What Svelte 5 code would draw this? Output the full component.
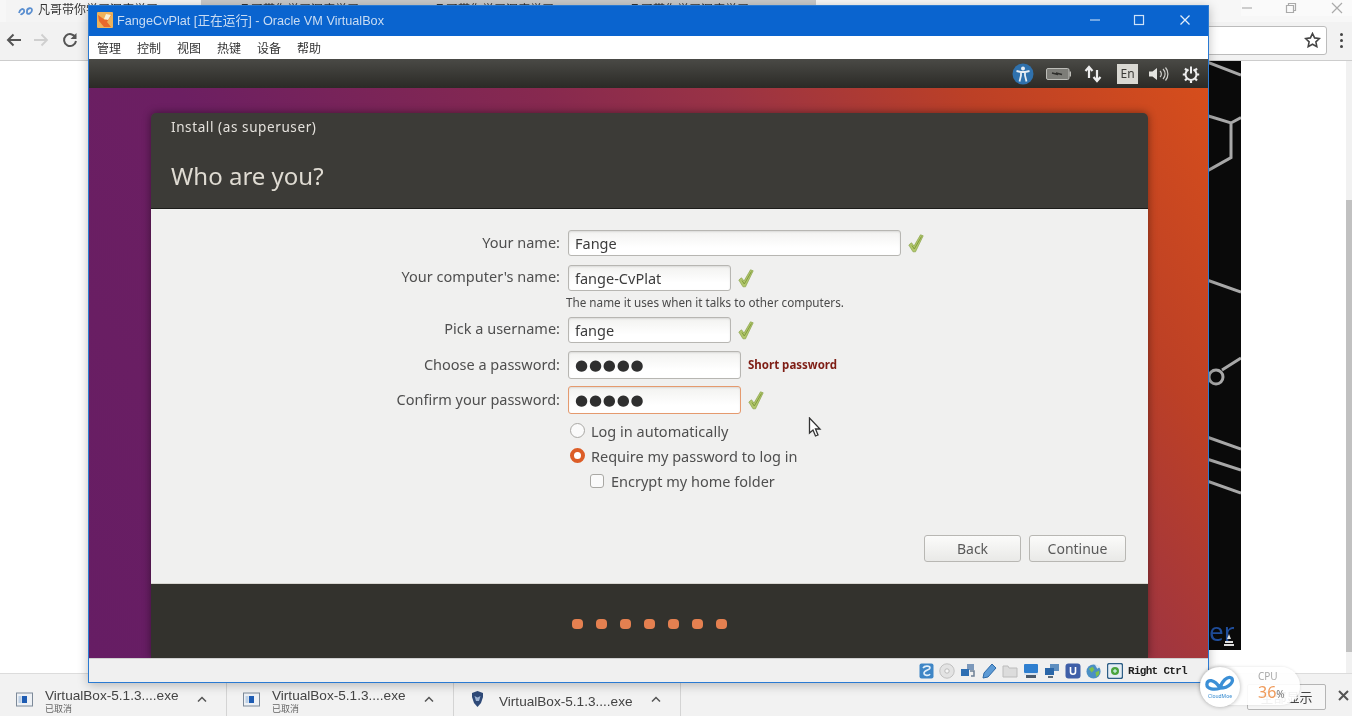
<script>
  const tabs = ['凡哥带你学习深度学习', '凡哥带你学习深度学习', '凡哥带你学习深度学习'];
  const menus = ['管理', '控制', '视图', '热键', '设备', '帮助'];
  const dots = [0, 1, 2, 3, 4, 5, 6];
  const downloads = [
    { name: 'VirtualBox-5.1.3....exe', sub: '已取消', kind: 'file' },
    { name: 'VirtualBox-5.1.3....exe', sub: '已取消', kind: 'file' },
    { name: 'VirtualBox-5.1.3....exe', sub: '', kind: 'vbox' }
  ];
</script>

{#snippet tick()}
  <svg class="tick" width="16" height="19" viewBox="0 0 16 19" aria-hidden="true">
    <path d="M.8 11 L3.500 8.800 L6 12 L12.500 .8 L15.200 1.800 L7.500 17.800 L5 17.800 Z" fill="#b2c76c" stroke="#8aa34a" stroke-width=".7"/>
    <path d="M4 11.500 L6.300 15 L13.500 2.500" fill="none" stroke="#7f9a3c" stroke-width="1"/>
  </svg>
{/snippet}

<div class="page">
  <div class="tabstrip">
    <div class="tab active">
      <svg width="16" height="10" viewBox="0 0 16 10" aria-hidden="true"><path d="M1 7c1-4 4-5 5-3S4 9 2.500 8M9 5c0-3 5-4 5-1s-4 5-5 3z" fill="none" stroke="#5b8fd0" stroke-width="1.800"/></svg>
      <span>{tabs[0]}</span>
    </div>
    {#each tabs as t}
      <div class="tab"><span class="favicon"></span><span>{t}</span></div>
    {/each}
    <div class="tab newtab"></div>
    <div class="caption">
      <svg width="12" height="12" viewBox="0 0 12 12" aria-hidden="true"><path d="M1 6h10" stroke="#b5b5b5" stroke-width="1.300"/></svg>
      <svg width="12" height="12" viewBox="0 0 12 12" aria-hidden="true"><path d="M1.500 3.500h7v7h-7zM3.500 3.500v-2h7v7h-2" fill="none" stroke="#aaa" stroke-width="1.200"/></svg>
      <svg class="cap-close" width="12" height="12" viewBox="0 0 12 12" aria-hidden="true"><path d="M1 1l10 10M11 1L1 11" stroke="#aaa" stroke-width="1.200"/></svg>
    </div>
  </div>

  <div class="toolbar">
    <div class="nav">
      <svg width="16" height="14" viewBox="0 0 16 14" aria-hidden="true"><path d="M15 7H2M7.500 1.500L2 7l5.500 5.500" fill="none" stroke="#555" stroke-width="2"/></svg>
      <svg width="16" height="14" viewBox="0 0 16 14" aria-hidden="true"><path d="M1 7h13M8.500 1.500L14 7l-5.500 5.500" fill="none" stroke="#cfcfcf" stroke-width="1.800"/></svg>
      <svg class="reload" width="16" height="16" viewBox="0 0 16 16" aria-hidden="true"><path d="M13.500 5.500A6 6 0 1 0 14 9" fill="none" stroke="#555" stroke-width="2"/><path d="M14.500 1v6h-6z" fill="#555"/></svg>
    </div>
    <div class="omnibox">
      <svg width="17" height="16" viewBox="0 0 17 16" aria-hidden="true"><path d="M8.500 1.500l2.100 4.400 4.800.6-3.500 3.300.9 4.800-4.300-2.400-4.300 2.400.9-4.800L1.600 6.500l4.800-.6z" fill="none" stroke="#444" stroke-width="1.600"/></svg>
    </div>
    <div class="menu-dots"><i></i><i></i><i></i></div>
  </div>

  <div class="content">
    <div class="video">
      <svg class="circuit" width="33" height="589" viewBox="1209 61 33 589" aria-hidden="true">
        <g fill="none" stroke="#a8a8a8" stroke-width="3">
          <path d="M1208 62l34 13M1208 115.500l24 7.500 10-5.500M1232 123v34.500l-24 13.500"/>
          <path d="M1208 280l34 12M1223 370l19-12"/>
          <circle cx="1217" cy="377" r="7"/>
          <path d="M1208 437l34 12M1208 459l34 11M1208 481l34 12"/>
        </g>
      </svg>
      <span class="er">er</span>
      <svg class="figure" width="10" height="14" viewBox="0 0 10 14" aria-hidden="true"><path d="M5 1l2 5H3zM1 8h8v2H1zM0 11h10v2H0z" fill="#ddd"/></svg>
    </div>
    <div class="scrollbar"><span class="thumb"></span></div>
  </div>

  <div class="downloads">
    {#each downloads as d}
      <div class="dl">
        {#if d.kind === 'file'}
          <svg width="17" height="15" viewBox="0 0 17 15" aria-hidden="true"><rect x=".5" y="1" width="16" height="13" fill="#eef1f5" stroke="#7d8a99"/><rect x="6" y="4" width="5" height="7" fill="#1e5cb3"/><rect x="2.500" y="4" width="3" height="7" fill="#bcd0e6"/></svg>
        {:else}
          <svg class="vbox-ico" width="13" height="16" viewBox="0 0 13 16" aria-hidden="true"><path d="M1 2l5.500-2L12 2v4l-2 6-3.500 4L3 12 1 6z" fill="#2f4a78"/><path d="M3.500 5l3 1.500L9.500 5 8 10H5z" fill="#9db4d4"/></svg>
        {/if}
        <div class="dl-text" class:single={!d.sub}>
          <span class="dl-name">{d.name}</span>
          {#if d.sub}<span class="dl-sub">{d.sub}</span>{/if}
        </div>
        <svg class="chev" width="10" height="6" viewBox="0 0 10 6" aria-hidden="true"><path d="M1 5.500l4-4 4 4" fill="none" stroke="#555" stroke-width="1.500"/></svg>
      </div>
    {/each}
    <div class="dl-right">
      <span class="showall">全部显示</span>
      <svg width="11" height="11" viewBox="0 0 11 11" aria-hidden="true"><path d="M1 1l9 9M10 1l-9 9" stroke="#555" stroke-width="2"/></svg>
    </div>
  </div>

  <div class="vbox">
    <div class="vb-title">
      <svg width="16" height="16" viewBox="0 0 16 16" aria-hidden="true"><rect width="16" height="16" rx="1" fill="#eeb25a"/><path d="M1 3l7 5 7-6-5 8 4 5H7L2 9z" fill="#e9692c"/><path d="M9 2l5 1-3 5-4-1z" fill="#f7f0d8"/></svg>
      <span class="vb-name">FangeCvPlat [正在运行] - Oracle VM VirtualBox</span>
      <div class="vb-btns">
        <svg width="12" height="12" viewBox="0 0 12 12" aria-hidden="true"><path d="M1 6h10" stroke="#b9d4f2" stroke-width="1.200"/></svg>
        <svg width="12" height="12" viewBox="0 0 12 12" aria-hidden="true"><rect x="1.500" y="1.500" width="9" height="9" fill="none" stroke="#cfe2f7" stroke-width="1.200"/></svg>
        <svg class="vb-close" width="12" height="12" viewBox="0 0 12 12" aria-hidden="true"><path d="M1.500 1.500l9 9M10.500 1.500l-9 9" stroke="#e3eefa" stroke-width="1.300"/></svg>
      </div>
    </div>
    <div class="vb-menu">
      {#each menus as m}<span>{m}</span>{/each}
    </div>

    <div class="guest">
      <div class="panel">
        <svg width="22" height="22" viewBox="0 0 22 22" aria-hidden="true"><circle cx="11" cy="11" r="10.500" fill="#2f71ad"/><circle cx="11" cy="5.500" r="2" fill="#e8eef4"/><path d="M4.500 8l4.500 1v3.500L7.500 18.500M17.500 8L13 9v3.500l1.500 6M9 9h4" fill="none" stroke="#e8eef4" stroke-width="1.800"/></svg>
        <svg width="25" height="12" viewBox="0 0 25 12" aria-hidden="true"><rect x=".5" y=".5" width="22.500" height="11" rx="1.500" fill="#7d7d78" stroke="#bdbdb8"/><rect x="23.500" y="3.500" width="1.500" height="5" fill="#bdbdb8"/><path d="M6 5l6 1.500L10 5l6 1.500" fill="none" stroke="#2f2f2c" stroke-width="1.500"/></svg>
        <svg width="18" height="18" viewBox="0 0 18 18" aria-hidden="true"><path d="M5 13V3M1.500 6L5 2l3.500 4" fill="none" stroke="#eee" stroke-width="2.200"/><path d="M13 5v10M9.500 12l3.500 4 3.500-4" fill="none" stroke="#eee" stroke-width="2.200"/></svg>
        <span class="en">En</span>
        <svg width="21" height="16" viewBox="0 0 21 16" aria-hidden="true"><path d="M1 5.500h3.500L9 2v12L4.500 10.500H1z" fill="#e4e4e0"/><path d="M12 5a4 4 0 0 1 0 6M15 3a7 7 0 0 1 0 10M17.500 1.500a10 10 0 0 1 0 13" fill="none" stroke="#d0d0cc" stroke-width="1.200"/></svg>
        <svg width="18" height="18" viewBox="0 0 18 18" aria-hidden="true"><path d="M6.500 4.500a5.500 5.500 0 1 0 5 0" fill="none" stroke="#eee" stroke-width="2"/><path d="M9 1.500v7" stroke="#eee" stroke-width="2"/><path d="M3 3.500l2 2M15 3.500l-2 2M.8 9.500h2.400M14.800 9.500h2.400M3 15.500l2-2M15 15.500l-2-2M9 15.500V18" stroke="#eee" stroke-width="2.200"/></svg>
      </div>

      <div class="wallpaper">
        <div class="dialog">
          <header class="dlg-head">
            <div class="dlg-app">Install (as superuser)</div>
            <h1>Who are you?</h1>
          </header>

          <div class="dlg-body">
            <div class="row r1"><span class="label">Your name:</span><div class="entry w332">Fange</div>{@render tick()}</div>
            <div class="row r2"><span class="label up">Your computer's name:</span><div class="entry w163">fange-CvPlat</div>{@render tick()}</div>
            <div class="hint">The name it uses when it talks to other computers.</div>
            <div class="row r3"><span class="label up">Pick a username:</span><div class="entry w163">fange</div>{@render tick()}</div>
            <div class="row r4 tall"><span class="label">Choose a password:</span><div class="entry w172 pw">●●●●●</div><span class="short">Short password</span></div>
            <div class="row r5 tall"><span class="label">Confirm your password:</span><div class="entry w172 pw focus">●●●●●</div>{@render tick()}</div>

            <div class="opt first"><span class="radio"></span>Log in automatically</div>
            <div class="opt"><span class="radio on"></span>Require my password to log in</div>
            <div class="opt sub"><span class="check"></span>Encrypt my home folder</div>

            <div class="actions">
              <button>Back</button>
              <button>Continue</button>
            </div>
          </div>

          <footer class="dlg-foot">
            {#each dots as d}<span class="dot"></span>{/each}
          </footer>
        </div>
      </div>
    </div>

    <div class="vb-status">
      <svg width="15" height="16" viewBox="0 0 15 16" aria-hidden="true"><rect x=".5" y=".5" width="14" height="15" rx="2" fill="#3f86c6"/><path d="M4 5c2-3 7-2 7 0s-6 2-6 5 5 3 6 1" fill="none" stroke="#e4f0fa" stroke-width="1.600"/></svg>
      <svg width="16" height="16" viewBox="0 0 16 16" aria-hidden="true"><circle cx="8" cy="8" r="7.200" fill="#e3e3e3" stroke="#c0c0c0"/><circle cx="8" cy="8" r="2.200" fill="#f7f7f7" stroke="#bbb"/></svg>
      <svg width="16" height="16" viewBox="0 0 16 16" aria-hidden="true"><rect x="7" y="1" width="7" height="6" fill="#7b98bb"/><rect x="1" y="6" width="8" height="7" fill="#2e6fb3"/><path d="M10 8h4v5h-3" fill="none" stroke="#6c7f94" stroke-width="1.500"/></svg>
      <svg width="16" height="16" viewBox="0 0 16 16" aria-hidden="true"><path d="M11 1l4 4-8 9-5 1 1-5z" fill="#5d9bd6" stroke="#2e6aa8"/></svg>
      <svg width="16" height="14" viewBox="0 0 16 14" aria-hidden="true"><path d="M1 2h5l1 2h8v9H1z" fill="#dcdcdc" stroke="#bcbcbc"/></svg>
      <svg width="16" height="16" viewBox="0 0 16 16" aria-hidden="true"><rect x="1" y="1" width="14" height="9" rx="1" fill="#2f7fd0"/><rect x="1" y="10" width="14" height="2" fill="#d8e2ee"/><rect x="3" y="12" width="10" height="3" fill="#4b5a6c"/></svg>
      <svg width="16" height="16" viewBox="0 0 16 16" aria-hidden="true"><rect x="6" y="1" width="9" height="7" fill="#5f8fc0"/><rect x="1" y="5" width="9" height="7" fill="#2a66a8"/><rect x="4" y="13" width="5" height="2" fill="#5a6a7a"/></svg>
      <svg width="16" height="16" viewBox="0 0 16 16" aria-hidden="true"><rect x=".5" y=".5" width="15" height="15" rx="3" fill="#3f5fa8"/><path d="M5.500 4v5c0 3 5 3 5 0V4" fill="none" stroke="#fff" stroke-width="1.600"/></svg>
      <svg width="16" height="16" viewBox="0 0 17 17" aria-hidden="true"><circle cx="8" cy="9" r="7.500" fill="#4b8fc4"/><path d="M3 6l4-2 2 3-3 3zM10 10l4-2v4l-3 3z" fill="#7cc04e"/><path d="M9 1l6 3-3 2z" fill="#dfe9f2"/></svg>
      <svg width="16" height="16" viewBox="0 0 16 16" aria-hidden="true"><rect x=".5" y=".5" width="15" height="15" rx="2" fill="#e4edf4" stroke="#2d5e86" stroke-width="1.400"/><circle cx="8" cy="8" r="4" fill="#4aa33c"/><path d="M6 8h4M8 6v4" stroke="#dff" stroke-width="1"/></svg>
      <span class="rctrl">Right Ctrl</span>
    </div>
  </div>

  <div class="meter">
    <div class="meter-logo">
      <svg width="30" height="18" viewBox="0 0 32 19" aria-hidden="true"><path d="M16 14C10 4 2 4 2 10 2 15 10 16 16 14 18 6 24 1 28 3 32 6 26 14 16 14Z" fill="none" stroke="#3b8fd6" stroke-width="3.500"/></svg>
      <span>CloudMoe</span>
    </div>
    <div class="meter-text"><span class="cpu">CPU</span><span class="pct">36<small>%</small></span></div>
  </div>

  <svg class="cursor" width="15" height="21" viewBox="0 0 15 21" aria-hidden="true"><path d="M1.500 1v15l3.500-3 2.500 6 2.500-1-2.500-6H12z" fill="#fff" stroke="#333" stroke-width="1.300"/></svg>
</div>

<style>
  :global(body) { margin: 0; }
  .page {
    position: relative; width: 1352px; height: 716px; overflow: hidden;
    display: flex; flex-direction: column; background: #fff;
    font-family: "Noto Sans", "Noto Sans CJK SC", sans-serif;
    filter: blur(.6px);
  }
  .tabstrip { height: 22px; flex: none; display: flex; background: #f7f7f7; padding-left: 6px; }
  .tab {
    width: 195px; display: flex; align-items: flex-start; gap: 4px; padding: 3px 0 0 22px;
    box-sizing: border-box; background: #c9c9c9; font-size: 12px; line-height: 14px; color: #333;
    white-space: nowrap; overflow: hidden;
  }
  .tab.active { background: #f4f4f4; padding-left: 12px; }
  .tab.active svg { margin-top: 3px; flex: none; }
  .favicon { width: 12px; height: 10px; background: #7ca4d4; flex: none; margin-top: 2px; }
  .tab.newtab { width: 30px; padding: 0; }
  .caption { margin-left: auto; display: flex; gap: 32px; padding: 2px 9px 0 0; background: #fafafa; height: 14px; }
  .cap-close { margin-left: 2px; }
  .toolbar {
    height: 39px; flex: none; display: flex; align-items: center; box-sizing: border-box;
    background: #f2f2f2; border-bottom: 1px solid #cdcdcd; padding: 0 5px 2px 6px; gap: 8px;
  }
  .nav { display: flex; gap: 11px; align-items: center; width: 74px; }
  .reload { margin-left: 2px; }
  .omnibox {
    flex: 1; height: 27px; background: #fff; border: 1px solid #bcbcbc; border-radius: 3px;
    display: flex; align-items: center; justify-content: flex-end; padding-right: 5px;
  }
  .menu-dots { display: flex; flex-direction: column; gap: 3px; width: 12px; align-items: center; }
  .menu-dots i { width: 3px; height: 3px; background: #444; border-radius: 50%; }

  .content { flex: 1; display: flex; justify-content: flex-end; min-height: 0; }
  .video { position: relative; width: 33px; height: 589px; background: #0a0a0a; margin-right: 105px; overflow: hidden; }
  .circuit { display: block; }
  .er { position: absolute; left: 1px; bottom: 1px; font-size: 26px; line-height: 36px; color: #204e9c; }
  .figure { position: absolute; left: 16px; bottom: 3px; }
  .scrollbar { width: 6px; background: #f1f1f1; position: relative; }
  .thumb { position: absolute; left: 0; right: 0; top: 139px; height: 452px; background: #c1c1c1; }

  .downloads {
    height: 43px; flex: none; display: flex; align-items: stretch; box-sizing: border-box;
    background: #f2f2f2; border-top: 1px solid #dcdcdc;
  }
  .dl {
    width: 227px; box-sizing: border-box; display: flex; align-items: center; border-right: 1px solid #d4d4d4;
    padding: 8px 0 0 16px; color: #444; position: relative;
  }
  .dl > svg:first-child { flex: none; }
  .vbox-ico { margin-left: 1px; }
  .dl-text { display: flex; flex-direction: column; margin-left: 12px; width: 150px; padding-top: 3px; }
  .dl-text.single { margin-left: 15px; padding-top: 4px; }
  .dl-name { font-family: "Liberation Sans", sans-serif; font-size: 13.600px; line-height: 15px; white-space: nowrap; }
  .dl-sub { font-size: 9px; line-height: 11px; color: #666; }
  .chev { margin-left: 2px; }
  .dl-right { margin-left: auto; display: flex; align-items: center; gap: 12px; padding-right: 3px; }
  .showall {
    width: 79px; height: 26px; box-sizing: border-box; border: 1px solid #b5b5b5; border-radius: 2px; background: #f6f6f6;
    font-size: 13px; line-height: 24px; text-align: center; color: #444; margin-top: 3px;
  }

  .vbox {
    position: absolute; left: 88px; top: 5px; width: 1121px; height: 678px; box-sizing: border-box;
    display: flex; flex-direction: column; border: 1px solid #2a7ad2; background: #f0f0f0;
    box-shadow: 0 2px 10px rgba(0, 0, 0, .25);
  }
  .vb-title {
    height: 30px; flex: none; background: #0a64cf; display: flex; align-items: center; padding: 0 0 3px 8px; gap: 4px;
    color: #c9dcf3; font-size: 12px; box-sizing: border-box;
  }
  .vb-name { font-family: "Liberation Sans", "Noto Sans CJK SC", sans-serif; font-size: 12.700px; }
  .vb-btns { margin-left: auto; display: flex; gap: 32px; padding-right: 17px; }
  .vb-btns svg { display: block; }
  .vb-close { margin-left: 2px; }
  .vb-menu {
    height: 23px; flex: none; background: #fff; display: flex; align-items: center; gap: 16px; padding-left: 8px;
    font-size: 12px; color: #333;
  }
  .guest { flex: 1; display: flex; flex-direction: column; min-height: 0; }
  .panel {
    height: 29px; flex: none; background: linear-gradient(#4a4a46, #2b2a26);
    display: flex; align-items: center; justify-content: flex-end; gap: 0; padding-right: 8px;
  }
  .panel svg:nth-child(1) { margin-right: 12px; }
  .panel svg:nth-child(2) { margin-right: 13px; }
  .panel svg:nth-child(3) { margin-right: 15px; }
  .panel svg:nth-child(5) { margin-right: 13px; margin-left: 10px; }
  .en {
    width: 21px; height: 20px; background: #d9d8d2; color: #3a3a36; font-size: 12px; line-height: 20px; text-align: center;
  }
  .wallpaper {
    flex: 1; min-height: 0; display: flex; padding: 25px 60px 0 62px;
    background: linear-gradient(55deg, #661d64 0%, #6c1f62 32%, #87294f 56%, #9a3345 68%, #bc4026 84%, #d64e1c 100%);
  }
  .dialog {
    flex: 1; display: flex; flex-direction: column; border-radius: 5px 5px 0 0; overflow: hidden;
    box-shadow: 0 0 8px rgba(0, 0, 0, .45);
  }
  .dlg-head { height: 96px; flex: none; background: #3c3b37; border-bottom: 1px solid #1c1c1a; box-sizing: border-box; padding: 5px 20px 0; color: #e4e1dc; }
  .dlg-app { font-size: 13.500px; line-height: 18px; letter-spacing: .6px; }
  h1 { margin: 24px 0 0; font-size: 24px; line-height: 32px; font-weight: 400; color: #dfdbd2; }

  .dlg-body { flex: 1; background: #f0f0ef; display: flex; flex-direction: column; padding-top: 21px; color: #4f4f4f; font-size: 14.500px; }
  .row { display: flex; align-items: center; height: 26px; }
  .row.tall { height: 28px; }
  .r2 { margin-top: 9px; }
  .r3 { margin-top: 7px; }
  .r4 { margin-top: 8px; }
  .r5 { margin-top: 7px; }
  .label { width: 409px; text-align: right; margin-right: 8px; white-space: nowrap; flex: none; position: relative; top: -1px; }
  .label.up { top: -2px; }
  .entry {
    height: 100%; box-sizing: border-box; border: 1px solid #b7b6b2; border-radius: 3px; padding: 0 6px;
    background: linear-gradient(#f2f2f0, #fff 70%); display: flex; align-items: center; color: #3c3c3c;
    box-shadow: inset 0 1px 2px rgba(0, 0, 0, .1);
  }
  .w332 { width: 333px; }
  .w163 { width: 163px; }
  .w172 { width: 173px; }
  .pw { font-family: "DejaVu Sans", sans-serif; font-size: 15px; color: #2f2f2f; letter-spacing: .8px; }
  .focus { border-color: #e59a6e; }
  .tick { margin-left: 7px; flex: none; }
  .hint { margin: 3px 0 0 415px; font-size: 11.700px; line-height: 16px; color: #4a4a4a; white-space: nowrap; }
  .short { margin: 0 0 2px 7px; font-size: 11.500px; font-weight: 700; color: #7e1d14; }
  .opt { height: 25px; display: flex; align-items: center; gap: 6px; padding-left: 419px; }
  .opt.first { margin-top: 4px; }
  .opt.sub { padding-left: 439px; gap: 7px; }
  .radio { width: 15px; height: 15px; border-radius: 50%; box-sizing: border-box; border: 1px solid #a9a8a4; background: #fafafa; }
  .radio.on { background: #fff; border: 4px solid #dc5d27; }
  .check { width: 14px; height: 14px; border-radius: 3px; box-sizing: border-box; border: 1px solid #a9a8a4; background: #fafafa; }
  .actions { margin-top: auto; display: flex; justify-content: flex-end; gap: 8px; padding: 0 22px 21px 0; }
  button {
    width: 97px; height: 27px; box-sizing: border-box; border: 1px solid #b8b7b3; border-radius: 3px;
    background: linear-gradient(#fbfbfa, #e9e9e7); font: inherit; font-size: 14px; color: #5a5a5a; padding: 0;
  }
  .dlg-foot { height: 75px; flex: none; background: #33322d; border-top: 1px solid #d8d6d0; box-sizing: border-box; display: flex; justify-content: center; align-items: center; gap: 13px; padding-top: 6px; }
  .dot { width: 11px; height: 10px; border-radius: 4px; background: #e58050; }
  .vb-status {
    height: 24px; flex: none; background: #f0f0f0; border-top: 1px solid #d0d0d0; display: flex; align-items: center; justify-content: flex-end;
    gap: 5px; padding-right: 20px; box-sizing: border-box;
  }
  .rctrl { font-family: "Liberation Mono", monospace; font-size: 11px; font-weight: 700; color: #222; width: 60px; white-space: nowrap; letter-spacing: -.7px; }

  .meter {
    position: absolute; left: 1200px; top: 667px; width: 100px; height: 38px; border-radius: 19px; background: rgba(255, 255, 255, .92);
    box-shadow: 0 0 3px rgba(0, 0, 0, .12); display: flex; align-items: center;
  }
  .meter-logo {
    width: 40px; height: 40px; margin-top: 1px; border-radius: 50%; background: #fff; box-shadow: 0 0 4px rgba(0, 0, 0, .3);
    display: flex; flex-direction: column; align-items: center; justify-content: center; flex: none;
  }
  .meter-logo span { font-size: 5px; line-height: 6px; color: #2f87cf; }
  .meter-text { margin-left: 18px; display: flex; flex-direction: column; color: #a9a9a9; font-size: 10px; line-height: 14px; }
  .pct { color: #ef9b5b; font-size: 16px; line-height: 18px; }
  .pct small { font-size: 10px; color: #777; }
  .cursor { position: absolute; left: 808px; top: 417px; }
</style>
